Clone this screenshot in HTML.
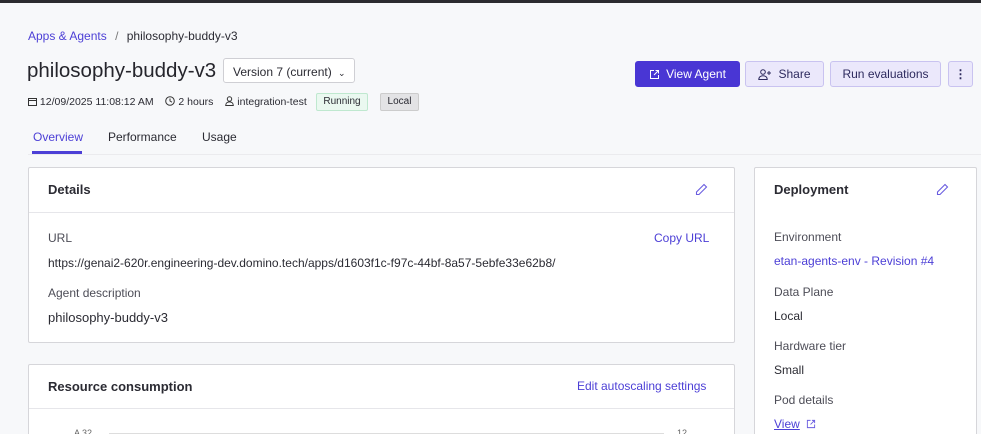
<!DOCTYPE html>
<html><head><style>
*{box-sizing:border-box;margin:0;padding:0}
html,body{width:981px;height:434px;overflow:hidden}
body{background:#f7f8fa;font-family:"Liberation Sans",sans-serif;color:#2b2b33;position:relative}
.a{position:absolute;white-space:nowrap}
.card{position:absolute;background:#fff;border:1px solid #d6d6da;border-radius:2px}
.lbl{font-size:12px;color:#4d4d57}
.val{font-size:12px;color:#2b2b33}
.btn{position:absolute;top:61px;height:26px;border-radius:3px;font-size:12px;display:flex;align-items:center;justify-content:center;background:#ebe8fb;border:1px solid #c9c3f0;color:#2d2a5e}
</style></head><body>
<div class="a" style="left:0;top:0;width:981px;height:3px;background:#2b2b30"></div>
<div class="a" style="left:28px;top:29px;font-size:12px;color:#4c3fd6">Apps &amp; Agents <span style="color:#777;margin:0 5px">/</span> <span style="color:#2b2b33">philosophy-buddy-v3</span></div>
<div class="a" style="left:27px;top:59px;font-size:20.5px;color:#25252c">philosophy-buddy-v3</div>
<div class="a" style="left:223px;top:58px;width:132px;height:25px;background:#fff;border:1px solid #cfcfd4;border-radius:3px;font-size:12px;padding:6px 0 0 9px">Version 7 (current) <span style="margin-left:3px;font-size:9px">&#8964;</span></div>
<div class="a" style="left:28px;top:96px;font-size:10.5px;color:#2b2b33">
<svg width="9" height="9" viewBox="0 0 9 9" style="vertical-align:-1px"><rect x=".5" y="1.5" width="8" height="7" fill="none" stroke="#333"/><line x1=".5" y1="3.5" x2="8.5" y2="3.5" stroke="#333"/></svg> 12/09/2025 11:08:12 AM
<span style="margin-left:9px"><svg width="10" height="10" viewBox="0 0 10 10" style="vertical-align:-1px"><circle cx="5" cy="5" r="4.3" fill="none" stroke="#333"/><path d="M5 2.5V5l2 1.2" fill="none" stroke="#333"/></svg> 2 hours</span>
<span style="margin-left:9px"><svg width="9" height="10" viewBox="0 0 9 10" style="vertical-align:-1px"><circle cx="4.5" cy="3" r="2.2" fill="none" stroke="#333"/><path d="M.7 9.5c0-2.5 1.8-3.6 3.8-3.6s3.8 1.1 3.8 3.6z" fill="none" stroke="#333"/></svg> integration-test</span></div>
<div class="a" style="left:316px;top:93px;width:52px;height:18px;background:#eaf8f0;border:1px solid #bfe8cf;border-radius:2px;font-size:10px;text-align:center;line-height:16px">Running</div>
<div class="a" style="left:380px;top:93px;width:39px;height:18px;background:#e3e3e5;border:1px solid #ccc;border-radius:2px;font-size:10px;text-align:center;line-height:16px">Local</div>
<div class="a" style="left:33px;top:130px;font-size:12px;color:#4c3fd6">Overview</div>
<div class="a" style="left:32px;top:151px;width:50px;height:3px;background:#4c3fd6"></div>
<div class="a" style="left:108px;top:130px;font-size:12px">Performance</div>
<div class="a" style="left:202px;top:130px;font-size:12px">Usage</div>
<div class="a" style="left:28px;top:154px;width:953px;height:1px;background:#ebebee"></div>
<div class="btn" style="left:635px;width:105px;background:#4936d4;border-color:#4936d4;color:#fff"><svg width="11" height="11" viewBox="0 0 11 11" style="margin-right:6px"><path d="M5 1.5H1.5v8h8V6M6.5 1.5h3v3M9.5 1.5 5 6" fill="none" stroke="#fff"/></svg>View Agent</div>
<div class="btn" style="left:745px;width:79px"><svg width="14" height="11" viewBox="0 0 14 11" style="margin-right:6px"><circle cx="5" cy="3" r="2.3" fill="none" stroke="#2d2a5e"/><path d="M.8 10.5c0-2.6 2-3.8 4.2-3.8s4.2 1.2 4.2 3.8zM11 2v4M9 4h4" fill="none" stroke="#2d2a5e"/></svg>Share</div>
<div class="btn" style="left:830px;width:111px">Run evaluations</div>
<div class="btn" style="left:948px;width:25px;font-weight:bold">&#8942;</div>

<div class="card" style="left:28px;top:167px;width:707px;height:176px">
<div class="a" style="left:19px;top:14px;font-size:13px;font-weight:bold">Details</div>
<svg class="a" style="left:666px;top:15px" width="13" height="13" viewBox="0 0 13 13"><path d="M9 1.5l2.5 2.5L4 11.5H1.5V9z" fill="none" stroke="#6a5de0" stroke-width="1.1"/></svg>
<div class="a" style="left:0;top:44px;width:705px;height:1px;background:#e6e6ea"></div>
<div class="a lbl" style="left:19px;top:63px">URL</div>
<div class="a" style="left:625px;top:63px;font-size:12px;color:#4c3fd6">Copy URL</div>
<div class="a" style="left:19px;top:88px;font-size:12px">https://genai2-620r.engineering-dev.domino.tech/apps/d1603f1c-f97c-44bf-8a57-5ebfe33e62b8/</div>
<div class="a lbl" style="left:19px;top:118px">Agent description</div>
<div class="a" style="left:19px;top:142px;font-size:13px">philosophy-buddy-v3</div>
</div>

<div class="card" style="left:28px;top:364px;width:707px;height:80px">
<div class="a" style="left:19px;top:14px;font-size:13px;font-weight:bold">Resource consumption</div>
<div class="a" style="left:548px;top:14px;font-size:12px;color:#4c3fd6">Edit autoscaling settings</div>
<div class="a" style="left:0;top:43px;width:705px;height:1px;background:#e6e6ea"></div>
<div class="a" style="left:45px;top:63px;font-size:9px;color:#666">A 32</div>
<div class="a" style="left:80px;top:68px;width:555px;height:1px;background:#ddd"></div>
<div class="a" style="left:648px;top:63px;font-size:9px;color:#666">12</div>
</div>

<div class="card" style="left:754px;top:167px;width:223px;height:280px">
<div class="a" style="left:19px;top:14px;font-size:13px;font-weight:bold">Deployment</div>
<svg class="a" style="left:181px;top:15px" width="13" height="13" viewBox="0 0 13 13"><path d="M9 1.5l2.5 2.5L4 11.5H1.5V9z" fill="none" stroke="#6a5de0" stroke-width="1.1"/></svg>
<div class="a lbl" style="left:19px;top:62px">Environment</div>
<div class="a" style="left:19px;top:86px;font-size:12px;color:#4c3fd6">etan-agents-env - Revision #4</div>
<div class="a lbl" style="left:19px;top:117px">Data Plane</div>
<div class="a val" style="left:19px;top:141px">Local</div>
<div class="a lbl" style="left:19px;top:171px">Hardware tier</div>
<div class="a val" style="left:19px;top:195px">Small</div>
<div class="a lbl" style="left:19px;top:225px">Pod details</div>
<div class="a" style="left:19px;top:249px;font-size:12px;color:#4c3fd6;text-decoration:underline">View</div>
<svg class="a" style="left:51px;top:251px" width="10" height="10" viewBox="0 0 11 11"><path d="M5 1.5H1.5v8h8V6M6.5 1.5h3v3M9.5 1.5 5 6" fill="none" stroke="#6a5de0"/></svg>
</div>
</body></html>
